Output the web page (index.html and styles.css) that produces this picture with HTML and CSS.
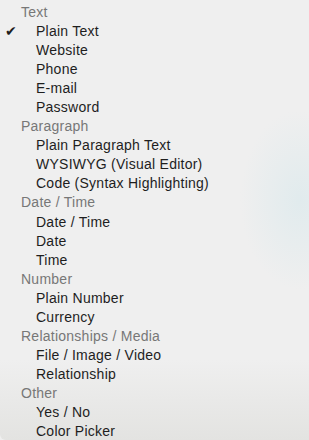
FILE: index.html
```html
<!DOCTYPE html>
<html lang="en">
<head>
    <meta charset="UTF-8">
    <title>Field Type Menu</title>
    <link rel="stylesheet" href="styles.css">
</head>
<body>
    <div class="menu">
        <div class="group">Text</div>
        <div class="item checked">Plain Text</div>
        <div class="item">Website</div>
        <div class="item">Phone</div>
        <div class="item">E-mail</div>
        <div class="item">Password</div>
        <div class="group">Paragraph</div>
        <div class="item">Plain Paragraph Text</div>
        <div class="item">WYSIWYG (Visual Editor)</div>
        <div class="item">Code (Syntax Highlighting)</div>
        <div class="group">Date / Time</div>
        <div class="item">Date / Time</div>
        <div class="item">Date</div>
        <div class="item">Time</div>
        <div class="group">Number</div>
        <div class="item">Plain Number</div>
        <div class="item">Currency</div>
        <div class="group">Relationships / Media</div>
        <div class="item">File / Image / Video</div>
        <div class="item">Relationship</div>
        <div class="group">Other</div>
        <div class="item">Yes / No</div>
        <div class="item">Color Picker</div>
    </div>
</body>
</html>
```
FILE: styles.css
```css
body {
    margin: 0;
    background: #efefef;
    font-family: "Liberation Sans", Arial, sans-serif;
}
.menu {
    width: 309px;
    height: 440px;
    box-sizing: border-box;
    padding-top: 3px;
    border-bottom-left-radius: 6px;
    background:
        radial-gradient(ellipse 60px 90px at 300px 200px, rgba(215, 232, 236, 0.6), rgba(215, 232, 236, 0)),
        linear-gradient(to bottom, #efefef 0, #efefef 360px, #e3e3e1 440px);
    overflow: hidden;
}
.group,
.item {
    height: 19.05px;
    line-height: 19px;
    font-size: 14px;
    letter-spacing: 0.25px;
    white-space: nowrap;
}
.group {
    padding-left: 21px;
    color: #777;
}
.item {
    padding-left: 36px;
    color: #1e1e1e;
    position: relative;
}
.checked::before {
    content: "\2714";
    position: absolute;
    left: 5px;
    top: 0;
    font-size: 14px;
    color: #1e1e1e;
}
```
